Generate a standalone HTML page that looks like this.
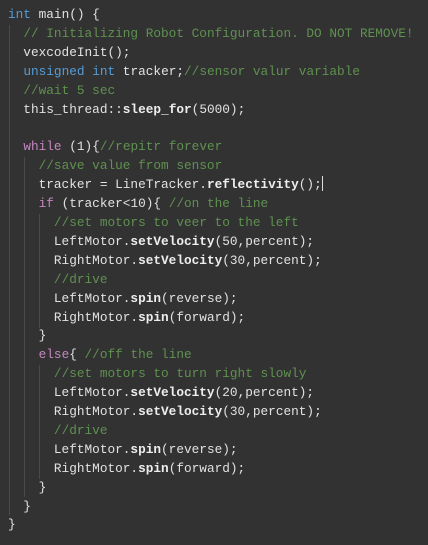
<html><head><style>
body{margin:0;background:#323232;width:428px;height:545px;overflow:hidden}
pre{margin:0;position:absolute;left:8px;top:6px;font-family:"Liberation Mono",monospace;font-size:12.75px;line-height:18.9px;color:#e2e2e2}
.k{color:#569cd6}.p{color:#c586c0}.c{color:#5f9150}.f{font-weight:bold;color:#eeeeee}.n{color:#e2e2e2}
.g{position:absolute;width:1px;background:#4a4a4a}
.cur{display:inline-block;width:1px;height:15px;background:#ddd;vertical-align:-3px}
</style></head><body>
<div class="g" style="left:9px;top:25px;height:490px"></div>
<div class="g" style="left:24px;top:157px;height:340px"></div>
<div class="g" style="left:39px;top:214px;height:114px"></div>
<div class="g" style="left:39px;top:365px;height:114px"></div>
<pre><span class="k">int</span> main() {
  <span class="c">// Initializing Robot Configuration. DO NOT REMOVE!</span>
  vexcodeInit();
  <span class="k">unsigned</span> <span class="k">int</span> tracker;<span class="c">//sensor valur variable</span>
  <span class="c">//wait 5 sec</span>
  this_thread::<span class="f">sleep_for</span>(<span class="n">5000</span>);

  <span class="p">while</span> (<span class="n">1</span>){<span class="c">//repitr forever</span>
    <span class="c">//save value from sensor</span>
    tracker = LineTracker.<span class="f">reflectivity</span>();<span class="cur"></span>
    <span class="p">if</span> (tracker&lt;<span class="n">10</span>){ <span class="c">//on the line</span>
      <span class="c">//set motors to veer to the left</span>
      LeftMotor.<span class="f">setVelocity</span>(<span class="n">50</span>,percent);
      RightMotor.<span class="f">setVelocity</span>(<span class="n">30</span>,percent);
      <span class="c">//drive</span>
      LeftMotor.<span class="f">spin</span>(reverse);
      RightMotor.<span class="f">spin</span>(forward);
    }
    <span class="p">else</span>{ <span class="c">//off the line</span>
      <span class="c">//set motors to turn right slowly</span>
      LeftMotor.<span class="f">setVelocity</span>(<span class="n">20</span>,percent);
      RightMotor.<span class="f">setVelocity</span>(<span class="n">30</span>,percent);
      <span class="c">//drive</span>
      LeftMotor.<span class="f">spin</span>(reverse);
      RightMotor.<span class="f">spin</span>(forward);
    }
  }
}</pre>
</body></html>
